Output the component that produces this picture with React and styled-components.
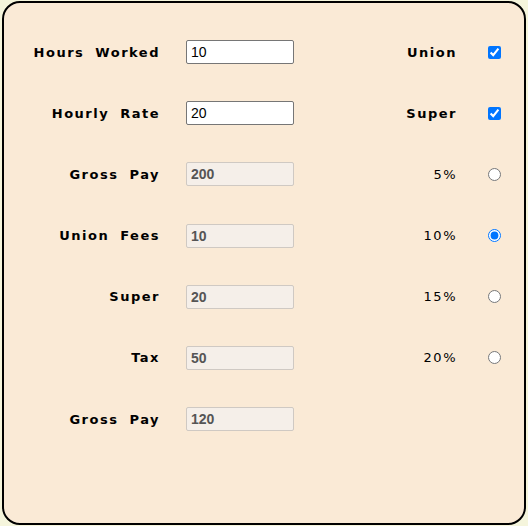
import React from 'react'
import styled, { createGlobalStyle } from 'styled-components'

const GlobalStyle = createGlobalStyle`
  html, body {
    margin: 0;
    padding: 0;
    background: #f5f5dc;
  }
  body {
    padding: 1px 2px;
  }
`

const Panel = styled.div`
  box-sizing: border-box;
  width: 524px;
  height: 524px;
  border: 2px solid #000;
  border-radius: 18px;
  background: #faead6;
  padding-top: 37px;
  display: grid;
  grid-template-columns: 156px 134px 163px 1fr;
  grid-auto-rows: 61.2px;
  align-items: start;
  font-family: "DejaVu Sans", Verdana, sans-serif;
`

const Label = styled.label`
  height: 24px;
  display: flex;
  align-items: center;
  justify-content: flex-end;
  font-size: 13px;
  font-weight: ${p => (p.light ? 'normal' : 'bold')};
  letter-spacing: 1.5px;
  word-spacing: 5px;
  color: #000;
`

const Field = styled.input`
  box-sizing: border-box;
  width: 108px;
  height: 24px;
  margin: 0 0 0 26px;
  padding: 1px 4px;
  font-family: "Liberation Sans", Arial, sans-serif;
  font-size: 14px;
  border: 1px solid ${p => (p.readOnly ? '#cfc9c3' : '#767676')};
  border-radius: 2px;
  background: ${p => (p.readOnly ? '#f5efe9' : '#fff')};
  color: ${p => (p.readOnly ? '#555' : '#000')};
  font-weight: ${p => (p.readOnly ? 'bold' : 'normal')};
  outline: none;
`

const Check = styled.div`
  height: 24px;
  display: flex;
  align-items: center;
  padding-left: 31px;
  input {
    margin: 0;
    width: 13px;
    height: 13px;
    accent-color: #0075ff;
  }
`

const Empty = styled.div``

const rows = [
  { label: 'Hours Worked', value: '10', edit: true, right: 'Union', type: 'checkbox', on: true },
  { label: 'Hourly Rate', value: '20', edit: true, right: 'Super', type: 'checkbox', on: true },
  { label: 'Gross Pay', value: '200', right: '5%', type: 'radio' },
  { label: 'Union Fees', value: '10', right: '10%', type: 'radio', on: true },
  { label: 'Super', value: '20', right: '15%', type: 'radio' },
  { label: 'Tax', value: '50', right: '20%', type: 'radio' },
  { label: 'Gross Pay', value: '120' },
]

export default function App() {
  return (
    <>
      <GlobalStyle />
      <Panel>
        {rows.map((r, i) => (
          <React.Fragment key={i}>
            <Label>{r.label}</Label>
            <Field defaultValue={r.value} readOnly={!r.edit} />
            {r.right ? (
              <>
                <Label light={r.type === 'radio'}>{r.right}</Label>
                <Check>
                  <input type={r.type} name={r.type === 'radio' ? 'rate' : undefined} defaultChecked={!!r.on} />
                </Check>
              </>
            ) : (
              <>
                <Empty />
                <Empty />
              </>
            )}
          </React.Fragment>
        ))}
      </Panel>
    </>
  )
}
